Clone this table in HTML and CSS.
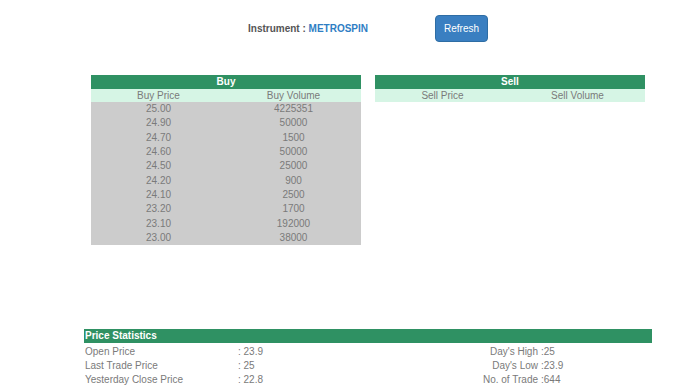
FILE: index.html
```html
<!DOCTYPE html>
<html>
<head>
<meta charset="utf-8">
<link rel="stylesheet" href="styles.css">
</head>
<body>
<div class="top">
  <span class="instr">Instrument : <span class="sym">METROSPIN</span></span>
  <button class="refresh">Refresh</button>
</div>
<div class="books">
  <table class="book">
    <tr class="head"><th colspan="2">Buy</th></tr>
    <tr class="sub"><td class="c1">Buy Price</td><td class="c2">Buy Volume</td></tr>
    <tr class="row"><td>25.00</td><td>4225351</td></tr>
    <tr class="row"><td>24.90</td><td>50000</td></tr>
    <tr class="row"><td>24.70</td><td>1500</td></tr>
    <tr class="row"><td>24.60</td><td>50000</td></tr>
    <tr class="row"><td>24.50</td><td>25000</td></tr>
    <tr class="row"><td>24.20</td><td>900</td></tr>
    <tr class="row"><td>24.10</td><td>2500</td></tr>
    <tr class="row"><td>23.20</td><td>1700</td></tr>
    <tr class="row"><td>23.10</td><td>192000</td></tr>
    <tr class="row"><td>23.00</td><td>38000</td></tr>
  </table>
  <table class="book">
    <tr class="head"><th colspan="2">Sell</th></tr>
    <tr class="sub"><td class="c1">Sell Price</td><td class="c2">Sell Volume</td></tr>
  </table>
</div>
<div class="stats">
  <div class="stats-head">Price Statistics</div>
  <div class="stats-grid">
    <span>Open Price</span><span>: 23.9</span><span class="rl">Day's High</span><span>:25</span>
    <span>Last Trade Price</span><span>: 25</span><span class="rl">Day's Low</span><span>:23.9</span>
    <span>Yesterday Close Price</span><span>: 22.8</span><span class="rl">No. of Trade</span><span>:644</span>
  </div>
</div>
</body>
</html>
```
FILE: styles.css
```css
html, body {
  margin: 0;
  padding: 0;
  background: #ffffff;
  font-family: "Liberation Sans", Arial, sans-serif;
  font-size: 10px;
  color: #7a7a7a;
}
.top {
  display: flex;
  align-items: center;
  padding: 15px 0 0 248px;
  height: 27px;
}
.instr {
  font-weight: bold;
  color: #555555;
}
.sym {
  color: #2f7ec4;
}
.refresh {
  margin-left: 67px;
  width: 53px;
  height: 27px;
  border: 1px solid #2e6da4;
  border-radius: 4px;
  background: #3a7fc1;
  color: #ffffff;
  font-family: "Liberation Sans", Arial, sans-serif;
  font-size: 10px;
  padding: 0;
}
.books {
  display: flex;
  align-items: flex-start;
  gap: 14px;
  padding-left: 91px;
  margin-top: 33px;
  height: 170px;
}
.book {
  width: 270px;
  border-collapse: collapse;
  border-spacing: 0;
  table-layout: fixed;
}
.book td, .book th {
  padding: 0;
  text-align: center;
}
.head th {
  background: #2f9163;
  color: #ffffff;
  font-weight: bold;
  height: 14px;
  line-height: 14px;
}
.sub td {
  background: #d6f5e5;
  height: 13px;
  line-height: 13px;
}
.sub .c1 { width: 138px; }
.row td {
  background: #cccccc;
  height: 14.3px;
  line-height: 14px;
}
.stats {
  margin: 84px 0 0 84px;
  width: 568px;
}
.stats-head {
  background: #2f9163;
  color: #ffffff;
  font-weight: bold;
  height: 14px;
  line-height: 14px;
  padding-left: 1px;
}
.stats-grid {
  display: grid;
  grid-template-columns: 153px 150px 153px 1fr;
  grid-auto-rows: 14px;
  line-height: 14px;
  padding: 2px 0 0 1px;
}
.stats-grid .rl {
  text-align: right;
  padding-right: 3px;
}
```
